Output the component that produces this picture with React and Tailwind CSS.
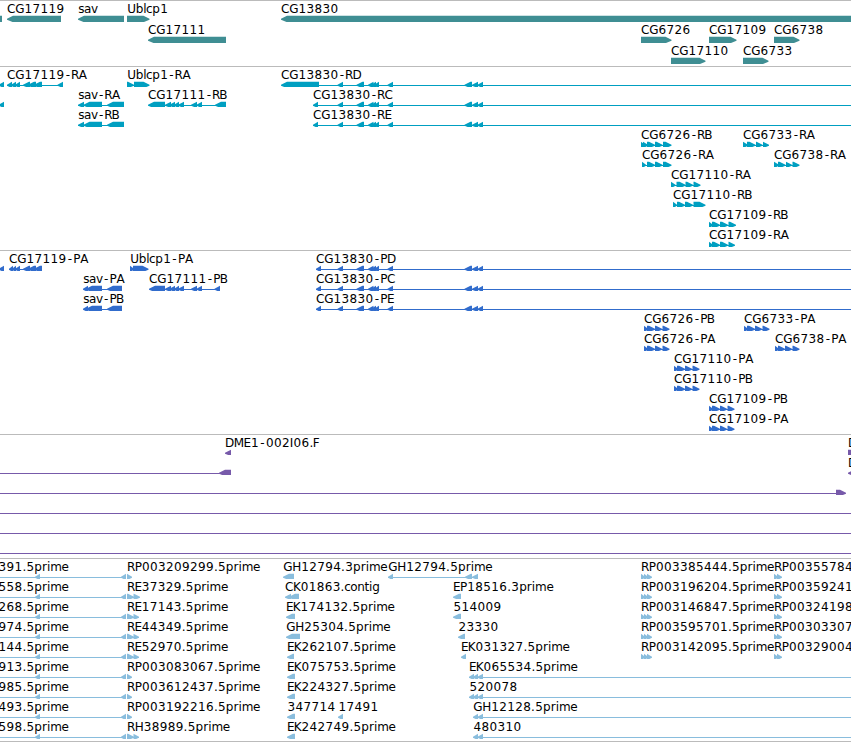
import React from 'react';

const WIDTH = 851;

// advance of each character in a label, in px
const ADVANCE = {
    C: 8, G: 9, R: 7.5, P: 7, E: 6.8, K: 7.2, H: 8.7, D: 8.7, M: 10, U: 8.5, B: 7, A: 8, I: 3.5, F: 6,
    s: 6, a: 7, v: 6.3, b: 7.5, l: 3, c: 6, p: 7.7, r: 5, i: 3.3, m: 11.5, e: 7, o: 7, n: 7, t: 4.5, g: 7.5,
    '-': 7, '.': 4,
};

const left = (x, label, exons, lines = []) => ({ x, label, exons, lines, dir: -1 });
const right = (x, label, exons, lines = []) => ({ x, label, exons, lines, dir: 1 });

const CG13830_EXONS = [[337.5, 343], [356.5, 364], [368, 373.5], [371, 376], [374, 379], [387.5, 393], [464.5, 472], [472, 478], [477.5, 483]];
const CG17119_EXONS = [[23, 30], [28, 36], [34, 42]];
const CG17111_EXONS = [[165, 171], [169.5, 175], [174, 179], [178, 184], [191, 197], [196.5, 202]];

const estLeft = (label) => left(-2, label, [[35, 40], [121, 126]], [[0, 126]]);
const estShort = (label) => right(127, label, [[127, 132]]);
const estLong = (label, end = 139) => right(127, label, [[127, 134], [133.5, end]], [[127, 139]]);
const rp641 = (label) => right(641, label, [[641, 645], [644, 648], [647, 652]]);
const rp774 = (label) => right(774, label, [[774, 778], [777, 782]]);

const TRACKS = [
    {
        name: 'gene',
        fill: 'fill-[#3f8e93]',
        rowClass: 'h-[21px]',
        padClass: 'pb-[2px]',
        rows: [
            [
                left(-20, '', [[-20, 2]]),
                left(7, 'CG17119', [[7, 61]]),
                left(78, 'sav', [[78, 124]]),
                right(127, 'Ublcp1', [[127, 149.5]]),
                left(281, 'CG13830', [[281, 870]]),
            ],
            [
                left(148, 'CG17111', [[148, 226]]),
                right(641, 'CG6726', [[641, 671.5]]),
                right(709, 'CG17109', [[709, 736.5]]),
                right(774, 'CG6738', [[774, 799.5]]),
            ],
            [
                right(671, 'CG17110', [[671, 705.5]]),
                right(743, 'CG6733', [[743, 768.5]]),
            ],
        ],
    },
    {
        name: 'transcript',
        fill: 'fill-[#009fc1]',
        rowClass: 'h-5',
        padClass: 'pb-[3px]',
        rows: [
            [
                left(-6, '', [[-1, 4]]),
                left(7, 'CG17119-RA', [[7, 12], [11, 16], [15, 20], ...CG17119_EXONS, [57.5, 63]], [[7, 63]]),
                right(127, 'Ublcp1-RA', [[127, 134], [134, 149.5]], [[127, 140]]),
                left(281, 'CG13830-RD', [[281, 319], ...CG13830_EXONS], [[300, WIDTH]]),
            ],
            [
                left(-6, '', [[-1, 4]]),
                left(78, 'sav-RA', [[78, 84], [83.5, 102], [107, 124]], [[78, 124]]),
                left(148, 'CG17111-RB', [[148, 165], ...CG17111_EXONS, [215, 226]], [[150, 224]]),
                left(313, 'CG13830-RC', [[313, 318], ...CG13830_EXONS], [[313, WIDTH]]),
            ],
            [
                left(78, 'sav-RB', [[78, 84], [83.5, 102], [107, 124]], [[78, 124]]),
                left(313, 'CG13830-RE', [[313, 318], ...CG13830_EXONS], [[313, WIDTH]]),
            ],
            [
                right(641, 'CG6726-RB', [[641, 645], [643, 648], [647, 655], [655, 662.5], [663, 671.5]], [[641, 670]]),
                right(743, 'CG6733-RA', [[743, 748], [747, 755.5], [756, 762.5], [763, 769]], [[743, 768]]),
            ],
            [
                right(642, 'CG6726-RA', [[642, 646], [647, 655], [655, 662.5], [663, 671.5]], [[642, 670]]),
                right(774, 'CG6738-RA', [[774, 779], [778, 785.5], [786, 792], [792.5, 799.5]], [[774, 798]]),
            ],
            [right(671, 'CG17110-RA', [[671, 675.5], [676.5, 685.5], [685.5, 693], [693.5, 700.5]], [[671, 699]])],
            [right(673, 'CG17110-RB', [[673, 677], [677, 685], [685, 693], [693.5, 705.5]], [[673, 704]])],
            [right(709, 'CG17109-RB', [[709, 713], [712, 720], [720, 728], [728.5, 736]], [[709, 735]])],
            [right(709, 'CG17109-RA', [[709, 713], [712, 720], [720, 728], [728.5, 735]], [[709, 734]])],
        ],
    },
    {
        name: 'protein',
        fill: 'fill-[#316ccc]',
        rowClass: 'h-5',
        padClass: 'pb-[3px]',
        rows: [
            [
                left(-6, '', [[-1, 4]]),
                left(9, 'CG17119-PA', [[9, 13], [12, 16], [15, 20], ...CG17119_EXONS], [[9, 42]]),
                right(130, 'Ublcp1-PA', [[130, 134], [133, 148.5]], [[130, 140]]),
                left(316, 'CG13830-PD', [[316, 321], ...CG13830_EXONS], [[316, WIDTH]]),
            ],
            [
                left(83, 'sav-PA', [[83, 88], [86, 102], [107, 122]], [[84, 122]]),
                left(149, 'CG17111-PB', [[149, 165], ...CG17111_EXONS, [214.5, 220]], [[150, 219]]),
                left(316, 'CG13830-PC', [[316, 321], ...CG13830_EXONS], [[316, WIDTH]]),
            ],
            [
                left(83, 'sav-PB', [[83, 88], [86, 102], [107, 122]], [[84, 122]]),
                left(316, 'CG13830-PE', [[316, 321], ...CG13830_EXONS], [[316, WIDTH]]),
            ],
            [
                right(644, 'CG6726-PB', [[644, 648], [647, 655], [655, 662], [662.5, 669.5]], [[644, 668]]),
                right(744, 'CG6733-PA', [[744, 748], [747, 755], [755, 762], [762.5, 769.5]], [[744, 768]]),
            ],
            [
                right(644, 'CG6726-PA', [[644, 648], [647, 655], [655, 662], [662.5, 669.5]], [[644, 668]]),
                right(775, 'CG6738-PA', [[775, 779], [778, 785], [785, 792], [792.5, 799.5]], [[775, 798]]),
            ],
            [right(674, 'CG17110-PA', [[674, 678], [677, 685], [685, 692], [692.5, 699.5]], [[674, 698]])],
            [right(674, 'CG17110-PB', [[674, 678], [677, 685], [685, 692], [692.5, 699.5]], [[674, 698]])],
            [right(709, 'CG17109-PB', [[709, 713], [712, 720], [720, 727], [727.5, 734.5]], [[709, 733]])],
            [right(709, 'CG17109-PA', [[709, 713], [712, 720], [720, 727], [727.5, 734.5]], [[709, 733]])],
        ],
    },
    {
        name: 'bac',
        fill: 'fill-[#775aaa]',
        rowClass: 'h-5',
        padClass: 'pb-[3px]',
        rows: [
            [left(225, 'DME1-002I06.F', [[225, 231]]), right(848, 'D', [[848, 870]])],
            [left(219, '', [[219, 231]], [[0, 225]]), left(848, 'D', [[848, 856]])],
            [right(836, '', [[836, 846]], [[0, 840]])],
            [right(0, '', [], [[0, WIDTH]])],
            [right(0, '', [], [[0, WIDTH]])],
            [right(0, '', [], [[0, WIDTH]])],
        ],
    },
    {
        name: 'est',
        fill: 'fill-[#89bddd]',
        rowClass: 'h-5',
        padClass: 'pb-[2px]',
        rows: [
            [
                estLeft('391.5prime'),
                estShort('RP003209299.5prime'),
                left(283, 'GH12794.3prime', [[283, 294]]),
                left(388, 'GH12794.5prime', [[388, 393], [465, 472], [472, 478]], [[388, 478]]),
                rp641('RP003385444.5prime'),
                rp774('RP00355784'),
            ],
            [
                estLeft('558.5prime'),
                estLong('RE37329.5prime', 140),
                left(285, 'CK01863.contig', [[285, 291], [289, 299]]),
                left(453, 'EP18516.3prime', [[453, 461]]),
                rp641('RP003196204.5prime'),
                rp774('RP00359241'),
            ],
            [
                estLeft('268.5prime'),
                estLong('RE17143.5prime'),
                left(286, 'EK174132.5prime', [[286, 295]]),
                left(453, '514009', [[453, 461]]),
                rp641('RP003146847.5prime'),
                rp774('RP00324198'),
            ],
            [
                estLeft('974.5prime'),
                estLong('RE44349.5prime'),
                left(286, 'GH25304.5prime', [[286, 300]]),
                left(458, '23330', [[458, 465]]),
                rp641('RP003595701.5prime'),
                rp774('RP00303307'),
            ],
            [
                estLeft('144.5prime'),
                estLong('RE52970.5prime'),
                left(287, 'EK262107.5prime', [[287, 294]]),
                left(461, 'EK031327.5prime', [[461, 466]]),
                rp641('RP003142095.5prime'),
                rp774('RP00329004'),
            ],
            [
                estLeft('913.5prime'),
                estShort('RP003083067.5prime'),
                left(287, 'EK075753.5prime', [[287, 295]]),
                left(469, 'EK065534.5prime', [[469, 474], [473, 478], [477.5, 483]], [[469, WIDTH]]),
            ],
            [
                estLeft('985.5prime'),
                estShort('RP003612437.5prime'),
                left(287, 'EK224327.5prime', [[287, 295]]),
                left(469, '520078', [[469, 474], [473, 478], [477.5, 483]], [[469, WIDTH]]),
            ],
            [
                estLeft('493.5prime'),
                estShort('RP003192216.5prime'),
                left(287, '347714', [[287, 295]]),
                left(338, '17491', [[338, 343]]),
                left(473, 'GH12128.5prime', [[473, 478], [477.5, 483]], [[473, WIDTH]]),
            ],
            [
                estLeft('598.5prime'),
                estLong('RH38989.5prime'),
                left(287, 'EK242749.5prime', [[287, 295]]),
                left(473, '480310', [[473, 478], [477.5, 483]], [[473, WIDTH]]),
            ],
        ],
    },
];

// middle of every character cell, used with text-anchor="middle"
const charCentres = (x, label) => {
    let pos = x;
    return [...label].map((ch) => {
        const w = ADVANCE[ch] ?? 8;
        const centre = pos + w / 2;
        pos += w;
        return centre;
    }).join(' ');
};

const exonPoints = ([x1, x2], dir) => {
    const head = Math.min(6, x2 - x1);
    const tip = dir < 0 ? x1 : x2;
    const tail = dir < 0 ? x2 : x1;
    const neck = tip - dir * head;
    return `${tip},17.7 ${neck},14.8 ${tail},14.8 ${tail},21.2 ${neck},21.2 ${tip},18.7`;
};

const Feature = ({ feature, fill }) => (
    <g>
        {feature.lines.map(([x1, x2]) => (
            <rect key={x1} x={x1} y={18} width={x2 - x1} height={1} className={fill} />
        ))}
        {feature.exons.map((exon) => (
            <polygon key={exon[0]} points={exonPoints(exon, feature.dir)} className={fill} />
        ))}
        {feature.label && (
            <text x={charCentres(feature.x + 0.3, feature.label)} y={12} textAnchor="middle" className="fill-black">
                {feature.label}
            </text>
        )}
    </g>
);

const Track = ({ track }) => (
    <section className={`border-b border-[#bbbbbb] ${track.padClass}`}>
        {track.rows.map((row, i) => (
            <svg key={i} width={WIDTH} className={`block ${track.rowClass}`}>
                {row.map((feature, j) => (
                    <Feature key={j} feature={feature} fill={track.fill} />
                ))}
            </svg>
        ))}
    </section>
);

const App = () => {
    return (
        <div className="flex h-[742px] w-[851px] flex-col overflow-hidden border-t border-[#bbbbbb] bg-white font-['DejaVu_Sans',sans-serif] text-[12px]">
            {TRACKS.map((track) => (
                <Track key={track.name} track={track} />
            ))}
        </div>
    );
};

export default App;
